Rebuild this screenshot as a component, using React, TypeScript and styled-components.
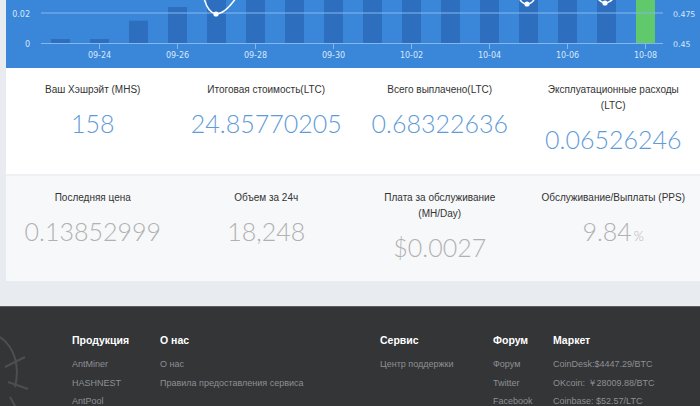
import React from "react";
import styled, { createGlobalStyle } from "styled-components";

const Global = createGlobalStyle`
  html, body { margin: 0; padding: 0; }
  body {
    background: #e8ebef;
    font-family: "Liberation Sans", Arial, sans-serif;
    width: 700px;
    height: 406px;
    overflow: hidden;
  }
`;

const Page = styled.div`
  padding-left: 6px;
  margin-bottom: 25px;
`;

const Card = styled.div`
  display: flex;
  flex-direction: column;
  background: #eef0f3;
`;

const ChartPanel = styled.div`
  height: 68px;
  background: #3a87d9;
  overflow: hidden;
`;

const StatsRow = styled.div<{ $alt?: boolean }>`
  display: grid;
  grid-template-columns: repeat(4, 1fr);
  height: ${(p) => (p.$alt ? "105px" : "106px")};
  margin-top: ${(p) => (p.$alt ? "2px" : "0")};
  background: ${(p) => (p.$alt ? "#f7f8fa" : "#ffffff")};
  box-sizing: border-box;
  padding-top: 14px;
`;

const Stat = styled.div`
  display: flex;
  flex-direction: column;
  align-items: center;
  text-align: center;
  padding: 0 10px;
`;

const Label = styled.div`
  font-size: 10px;
  line-height: 16px;
  color: #333333;
  max-width: 148px;
`;

const Value = styled.div<{ $grey?: boolean }>`
  margin-top: 10px;
  font-family: Lato, "Open Sans", sans-serif;
  font-weight: 300;
  font-size: 25px;
  line-height: 30px;
  color: ${(p) => (p.$grey ? "#b1b1b1" : "#5f9bd9")};
`;

const Unit = styled.span`
  font-size: 13px;
  margin-left: 2px;
`;

const Footer = styled.footer`
  position: relative;
  height: 100px;
  background: #333537;
  border-top: 1px solid #5c5e60;
  box-sizing: border-box;
  padding: 26px 0 0 72px;
  display: grid;
  grid-template-columns: 88px 220px 113px 60px 1fr;
  overflow: hidden;
`;

const Watermark = styled.svg`
  position: absolute;
  left: -30px;
  top: 20px;
  opacity: 0.12;
`;

const FooterCol = styled.div`
  display: flex;
  flex-direction: column;
`;

const FooterTitle = styled.div`
  font-size: 10.5px;
  font-weight: bold;
  color: #ffffff;
  line-height: 14px;
  margin-bottom: 8px;
`;

const FooterLink = styled.div`
  font-size: 9px;
  color: #8e9093;
  line-height: 18.5px;
  white-space: nowrap;
`;

const barTops = [39, 39, 20.7, 7, -5, -5, -5, -5, -5, -5, -5, -5, -5, -5, -5, -5];
const xLabels = ["09-24", "09-26", "09-28", "09-30", "10-02", "10-04", "10-06", "10-08"];

const axisFont = "DejaVu Sans, sans-serif";
const axisText = "#d9e8f8";

const Chart: React.FC = () => (
  <svg width="694" height="68" viewBox="6 0 694 68" style={{ display: "block" }}>
    {barTops.map((t, i) => (
      <rect
        key={i}
        x={51 + 39 * i}
        y={t}
        width={19}
        height={43 - t}
        fill={i === 15 ? "#5fc96b" : "#2d6fbe"}
      />
    ))}
    <line x1="41" y1="13" x2="663" y2="13" stroke="#86b7ec" strokeWidth="1" />
    <line x1="41" y1="43.5" x2="663" y2="43.5" stroke="#86b7ec" strokeWidth="1" />
    {xLabels.map((l, i) => {
      const x = 99.5 + 78 * i;
      return (
        <g key={l}>
          <line x1={x} y1="43" x2={x} y2="49" stroke="#86b7ec" strokeWidth="1" />
          <text x={x} y="58" textAnchor="middle" fontSize="8" fill={axisText} fontFamily={axisFont}>
            {l}
          </text>
        </g>
      );
    })}
    <text x="30" y="17" textAnchor="end" fontSize="8" fill={axisText} fontFamily={axisFont}>0.02</text>
    <text x="30" y="47" textAnchor="end" fontSize="8" fill={axisText} fontFamily={axisFont}>0</text>
    <text x="673" y="17" fontSize="7.8" fill={axisText} fontFamily={axisFont}>0.475</text>
    <text x="673" y="47" fontSize="7.8" fill={axisText} fontFamily={axisFont}>0.45</text>
    <path d="M204 -2 C206 6 210 13 216 14 C222 14 229 8 236 -2" fill="none" stroke="#ffffff" strokeWidth="1.5" />
    <path d="M519 -2 C521 2 524 4 527 4 C530 4 533 2 535 -2" fill="none" stroke="#ffffff" strokeWidth="1.5" />
    <path d="M597 -2 C600 1 602 3 605 3 C608 3 611 1 614 -2" fill="none" stroke="#ffffff" strokeWidth="1.5" />
    <circle cx="216" cy="14" r="2.6" fill="#ffffff" />
    <circle cx="527" cy="4" r="2.6" fill="#ffffff" />
    <circle cx="605" cy="3" r="2.6" fill="#ffffff" />
  </svg>
);

const row1 = [
  { label: "Ваш Хэшрэйт (MHS)", value: "158" },
  { label: "Итоговая стоимость(LTC)", value: "24.85770205" },
  { label: "Всего выплачено(LTC)", value: "0.68322636" },
  { label: "Эксплуатационные расходы (LTC)", value: "0.06526246" },
];

const row2 = [
  { label: "Последняя цена", value: "0.13852999" },
  { label: "Объем за 24ч", value: "18,248" },
  { label: "Плата за обслуживание (MH/Day)", value: "$0.0027" },
  { label: "Обслуживание/Выплаты (PPS)", value: "9.84", unit: "%" },
];

const footerCols = [
  { title: "Продукция", links: ["AntMiner", "HASHNEST", "AntPool"] },
  { title: "О нас", links: ["О нас", "Правила предоставления сервиса"] },
  { title: "Сервис", links: ["Центр поддержки"] },
  { title: "Форум", links: ["Форум", "Twitter", "Facebook"] },
  { title: "Маркет", links: ["CoinDesk:$4447.29/BTC", "OKcoin: ￥28009.88/BTC", "Coinbase: $52.57/LTC"] },
];

export default function App() {
  return (
    <>
      <Global />
      <Page>
        <Card>
          <ChartPanel>
            <Chart />
          </ChartPanel>
          <StatsRow>
            {row1.map((s) => (
              <Stat key={s.label}>
                <Label>{s.label}</Label>
                <Value>{s.value}</Value>
              </Stat>
            ))}
          </StatsRow>
          <StatsRow $alt>
            {row2.map((s) => (
              <Stat key={s.label}>
                <Label>{s.label}</Label>
                <Value $grey>
                  {s.value}
                  {s.unit && <Unit>{s.unit}</Unit>}
                </Value>
              </Stat>
            ))}
          </StatsRow>
        </Card>
      </Page>
      <Footer>
        <Watermark width="60" height="90" viewBox="0 0 60 90">
          <path d="M30 10 C45 20 50 40 45 60 M35 40 L55 30 M38 55 L58 62 M40 70 L50 88" stroke="#ffffff" strokeWidth="2" fill="none" />
        </Watermark>
        {footerCols.map((c) => (
          <FooterCol key={c.title}>
            <FooterTitle>{c.title}</FooterTitle>
            {c.links.map((l) => (
              <FooterLink key={l}>{l}</FooterLink>
            ))}
          </FooterCol>
        ))}
      </Footer>
    </>
  );
}
